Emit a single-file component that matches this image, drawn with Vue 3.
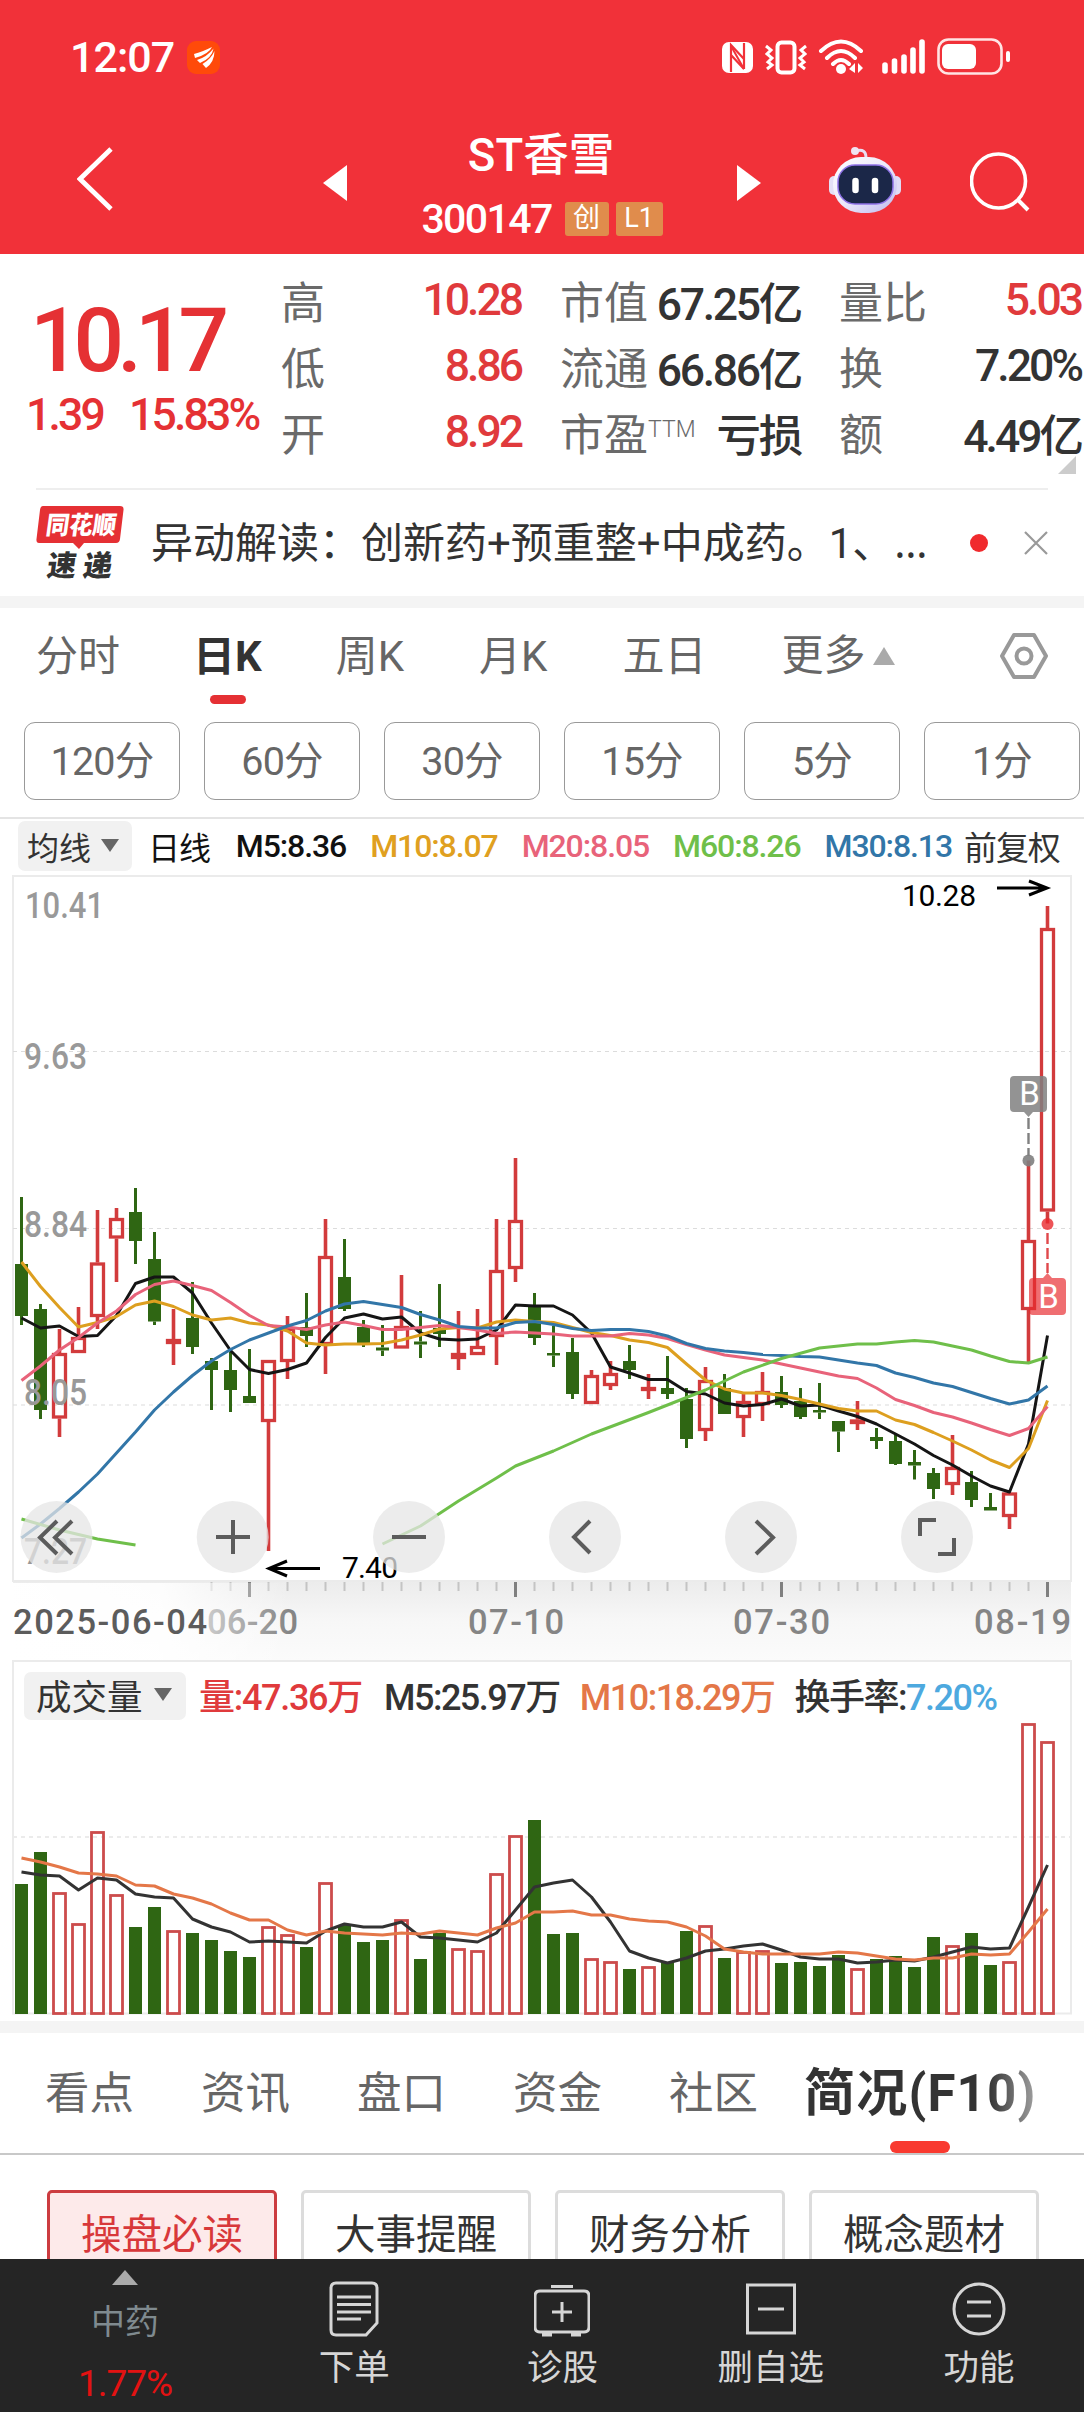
<template>
  <div class="page">
    <!-- 顶部标题栏 -->
    <header class="header">
      <div class="status-bar">
        <span class="clock">12:07</span>
        <svg class="app-badge" viewBox="0 0 33 33">
          <rect width="33" height="33" rx="9" fill="#ff4a0a" />
          <path d="M7 13 Q15 11 25 6 Q22 13 8 17 Z M10 19 Q20 16 26.500 7.500 Q25 17 13 22 Z M15.500 23 Q24 18 27.500 10 Q27.500 21 19 27 Z" fill="#fff" />
        </svg>
        <svg class="status-icons" viewBox="720 36 292 40">
          <rect x="722" y="41" width="31" height="31" rx="7" fill="#fff" />
          <path d="M731 71 V44 L744 58 M731 54 L744 68 M744 42 V68" fill="none" stroke="#f13139" stroke-width="2.200" />
          <path d="M731 45 L744 68" stroke="#f13139" stroke-width="2" />
          <rect x="777.500" y="41.500" width="17" height="30" rx="4" fill="none" stroke="#fff" stroke-width="4" />
          <path d="M766 45 l5 4 l-4 4 l5 4 l-4 4 l4 3 l-5 4 M806 45 l-5 4 l4 4 l-5 4 l4 4 l-4 3 l5 4" fill="none" stroke="#fff" stroke-width="3" />
          <path d="M821 50 Q841 31 861 50 M827 57 Q841 43 855 57 M833 63 Q841 55 849 63" fill="none" stroke="#fff" stroke-width="4" stroke-linecap="round" />
          <circle cx="841" cy="68" r="5" fill="#fff" />
          <path d="M849 68 l6 -6 v10 z M863 67 l-5 -5 v10 z" fill="#fff" />
          <path d="M885 64 V70 M894.500 60 V70 M904 56 V70 M913 49 V70 M922 41 V70" stroke="#fff" stroke-width="5.600" stroke-linecap="round" />
          <rect x="938.500" y="38.500" width="63" height="34" rx="10" fill="none" stroke="#ffe4e4" stroke-width="2.600" />
          <rect x="942" y="43" width="34" height="25" rx="6" fill="#fff" />
          <rect x="1006" y="50" width="4" height="11" rx="2" fill="#fff" />
        </svg>
      </div>
      <div class="nav">
        <svg class="back" viewBox="0 0 36 64"><path d="M34 2 L3 32 L34 62" fill="none" stroke="#fff" stroke-width="4.800" /></svg>
        <svg class="prev" viewBox="0 0 24 36"><path d="M24 0 V36 L0 18 Z" fill="#fff" /></svg>
        <div class="title">
          <div class="stock-name">ST香雪</div>
          <div class="stock-code">
            <span>300147</span><i class="tag">创</i><i class="tag wide">L1</i>
          </div>
        </div>
        <svg class="next" viewBox="0 0 24 36"><path d="M0 0 V36 L24 18 Z" fill="#fff" /></svg>
        <svg class="robot" viewBox="0 0 72 68">
          <defs>
            <linearGradient id="head" x1="0" y1="0" x2="1" y2="1">
              <stop offset="0" stop-color="#fff" />
              <stop offset=".5" stop-color="#ece9fa" />
              <stop offset="1" stop-color="#bdb8ee" />
            </linearGradient>
          </defs>
          <path d="M27 5 Q37 2 37 12" fill="none" stroke="#e9def2" stroke-width="3" />
          <circle cx="26" cy="5" r="4" fill="#f0e4f2" />
          <rect x="0" y="30" width="10" height="19" rx="5" fill="#e4e0f6" />
          <rect x="62" y="30" width="10" height="19" rx="5" fill="#e0dcf6" />
          <rect x="4" y="11" width="64" height="56" rx="28" fill="url(#head)" />
          <rect x="9" y="19" width="55" height="39" rx="17" fill="#1b2748" stroke="#8e72e6" stroke-width="1.500" />
          <path d="M26.500 35 V44 M46 35 V44" stroke="#fff" stroke-width="6.500" stroke-linecap="round" />
        </svg>
        <svg class="search" viewBox="0 0 60 60">
          <circle cx="28.500" cy="29" r="27" fill="none" stroke="#fff" stroke-width="3.600" />
          <path d="M47 47 L58 58" stroke="#fff" stroke-width="4" />
        </svg>
      </div>
    </header>

    <!-- 行情报价 -->
    <section class="quote">
      <div class="price">
        <div class="last">10.17</div>
        <div class="change"><span>1.39</span><span>15.83%</span></div>
      </div>
      <div v-for="(col, i) in quoteCols" :key="i" class="quote-col" :class="'col' + i">
        <div v-for="row in col" :key="row.label" class="quote-row">
          <span class="label">{{ row.label }}<sup v-if="row.sup">{{ row.sup }}</sup></span>
          <span class="value" :class="{ up: row.up }">{{ row.value }}</span>
        </div>
      </div>
      <i class="corner"></i>
    </section>

    <!-- 快讯 -->
    <section class="news">
      <svg class="news-logo" viewBox="0 0 90 80">
        <path d="M7 2 H84 Q88 2 87.500 6 L84 35 Q83.500 39 80 39 H48 L43 45 L37 39 H3 Q0 39 0.500 35 L4 6 Q4.500 2 7 2 Z" fill="#e53034" />
        <text x="0" y="0" transform="translate(9 30) skewX(-8)" textLength="70" lengthAdjust="spacingAndGlyphs" class="logo-top">同花顺</text>
        <text x="0" y="0" transform="translate(10 72) skewX(-8)" textLength="65" class="logo-bottom">速递</text>
      </svg>
      <span class="news-text">异动解读：创新药+预重整+中成药。1、<span class="dots">…</span></span>
      <i class="dot"></i>
      <svg class="close" viewBox="0 0 24 24"><path d="M1 1 L23 23 M23 1 L1 23" stroke="#999" stroke-width="2.200" /></svg>
    </section>

    <!-- 周期切换 -->
    <nav class="periods">
      <span v-for="p in periods" :key="p" class="period" :class="{ active: p === '日K' }">{{ p }}</span>
      <span class="period more">更多<i class="tri-up"></i></span>
      <svg class="setting" viewBox="0 0 48 48">
        <path d="M14 3 H34 L46 24 L34 45 H14 L2 24 Z" fill="none" stroke="#999" stroke-width="4" stroke-linejoin="round" />
        <circle cx="24" cy="24" r="7.500" fill="none" stroke="#999" stroke-width="4" />
      </svg>
    </nav>
    <div class="minutes">
      <span v-for="m in minutes" :key="m" class="minute">{{ m }}</span>
    </div>

    <!-- K线 -->
    <div class="ma-row">
      <span class="select">均线<i class="tri-down"></i></span>
      <span class="ma day">日线</span>
      <span v-for="m in maLegend" :key="m.text" class="ma" :class="m.cls">{{ m.text }}</span>
      <span class="ma fq">前复权</span>
    </div>
    <svg class="kline" viewBox="0 870 1084 790">
      <defs>
        <linearGradient id="axisBg" x1="0" y1="0" x2="0" y2="1">
          <stop offset="0" stop-color="#ececec" />
          <stop offset=".5" stop-color="#f7f7f7" />
          <stop offset="1" stop-color="#fbfbfb" />
        </linearGradient>
        <linearGradient id="axisFade" x1="0" y1="0" x2="1" y2="0">
          <stop offset="0" stop-color="#fff" />
          <stop offset=".55" stop-color="#fff" stop-opacity=".9" />
          <stop offset="1" stop-color="#fff" stop-opacity="0" />
        </linearGradient>
      </defs>
      <rect x="13" y="876" width="1058" height="705" class="frame" />
      <path d="M13 1051.500 H1071 M13 1228.500 H1071 M13 1405 H1071" class="grid" />

      <g v-for="(c, i) in candles" :key="i" :class="c[0]">
        <line :x1="x(i)" :x2="x(i)" :y1="c[1]" :y2="c[2]" />
        <line :x1="x(i)" :x2="x(i)" :y1="c[3]" :y2="c[4]" />
        <rect v-if="c[0] === 'g'" :x="x(i) - 6.5" :y="c[2]" width="13" :height="c[3] - c[2]" />
        <rect v-else :x="x(i) - 6" :y="c[2] + 1.5" width="12" :height="Math.max(c[3] - c[2] - 3, 1)" />
      </g>

      <g class="axis-price">
        <text x="25" y="918" textLength="79" lengthAdjust="spacingAndGlyphs">10.41</text>
        <text x="24" y="1069" textLength="63" lengthAdjust="spacingAndGlyphs">9.63</text>
        <text x="24" y="1237" textLength="63" lengthAdjust="spacingAndGlyphs">8.84</text>
        <text x="24" y="1405" textLength="63" lengthAdjust="spacingAndGlyphs">8.05</text>
        <text x="24" y="1564" textLength="63" lengthAdjust="spacingAndGlyphs">7.27</text>
      </g>

      <polyline v-for="l in maLines" :key="l.cls" :points="points(l.data)" class="ma-line" :class="l.cls" />
      <polyline :points="pairs(m60Head)" class="ma-line m60" />
      <polyline :points="pairs(m60)" class="ma-line m60" />

      <text x="902" y="906" class="extreme" textLength="74">10.28</text>
      <path d="M997 888 H1046 M1029 881 L1047 888 L1029 895" class="arrow" />
      <text x="342" y="1577.500" class="extreme" textLength="56">7.40</text>
      <path d="M320 1568.500 H270 M287 1561 L269 1568.500 L287 1576" class="arrow" />

      <!-- 买点标记 -->
      <g fill="#808080">
        <path d="M1014 1076 H1043 Q1047 1076 1047 1080 V1108 Q1047 1112 1043 1112 H1033 L1028.500 1117 L1024 1112 H1014 Q1010 1112 1010 1108 V1080 Q1010 1076 1014 1076 Z" opacity=".85" />
        <circle cx="1028.500" cy="1160.500" r="6" opacity=".9" />
        <path d="M1028.500 1118 V1156" stroke="#808080" stroke-width="2.400" stroke-dasharray="11 4" />
      </g>
      <g fill="#e8292d">
        <path d="M1033 1278 H1043 L1047.500 1273 L1052 1278 H1062 Q1066 1278 1066 1282 V1311 Q1066 1315 1062 1315 H1033 Q1029 1315 1029 1311 V1282 Q1029 1278 1033 1278 Z" opacity=".68" />
        <circle cx="1047.500" cy="1224" r="6" opacity=".8" />
        <path d="M1047.500 1233 V1273" stroke="#e0484b" stroke-width="2.400" stroke-dasharray="11 4" />
      </g>
      <text x="1029.500" y="1105" class="mark">B</text>
      <text x="1048.500" y="1308" class="mark">B</text>

      <!-- 图表操作按钮 -->
      <circle v-for="cx in [56.5, 232.7, 409, 585, 761, 937]" :key="cx" :cx="cx" cy="1537" r="36" class="op" />
      <g class="op-icon">
        <path d="M57 1521 L40 1537.500 L57 1554 M72 1521 L55 1537.500 L72 1554" />
        <path d="M216 1537 H250 M233 1520 V1554" />
        <path d="M392 1537 H426" />
        <path d="M590 1521 L574 1537 L590 1553" />
        <path d="M756 1521 L773 1537.500 L756 1554" />
        <path d="M920 1536 V1520 H936 M954 1538 V1554 H938" />
      </g>

      <!-- 时间轴 -->
      <rect x="13" y="1582" width="1058" height="78" fill="url(#axisBg)" />
      <path :d="minorTicks" stroke="#c4c4c4" stroke-width="2" />
      <path :d="majorTicks" stroke="#808080" stroke-width="3" />
      <g class="axis-date">
        <text x="207" y="1634" textLength="91">06-20</text>
        <text x="468" y="1634" textLength="96">07-10</text>
        <text x="733" y="1634" textLength="97">07-30</text>
        <text x="974" y="1634" textLength="97">08-19</text>
        <rect x="0" y="1583" width="290" height="77" fill="url(#axisFade)" />
        <text x="13" y="1634" textLength="194" class="start">2025-06-04</text>
      </g>
    </svg>

    <!-- 成交量 -->
    <section class="volume">
      <div class="vol-row">
        <span class="select">成交量<i class="tri-down"></i></span>
        <span class="vol up">量:47.36万</span>
        <span class="vol">M5:25.97万</span>
        <span class="vol orange">M10:18.29万</span>
        <span class="vol">换手率:<b>7.20%</b></span>
      </div>
      <svg class="vol-chart" viewBox="0 1720 1084 301">
        <path d="M13 1720 V2013.500 H1071 V1720" class="frame" />
        <path d="M13 1837 H1071" class="grid bold" />
        <template v-for="(v, i) in volumes" :key="i">
          <rect v-if="v[0] === 'g'" :x="x(i) - 6.5" :y="v[1]" width="13" :height="2014 - v[1]" class="vg" />
          <rect v-else :x="x(i) - 6" :y="v[1] + 0.5" width="12" :height="2013 - v[1]" class="vr" />
        </template>
        <polyline :points="points(volM5)" class="ma-line vm5" />
        <polyline :points="points(volM10)" class="ma-line vm10" />
      </svg>
    </section>

    <!-- 资料标签 -->
    <nav class="info-tabs">
      <span v-for="t in infoTabs" :key="t" class="info-tab">{{ t }}</span>
      <span class="info-tab active">简况(F10)</span>
    </nav>
    <div class="cards">
      <span v-for="(c, i) in cards" :key="c" class="card" :class="{ selected: i === 0 }">{{ c }}</span>
    </div>

    <!-- 底部操作栏 -->
    <footer class="footer">
      <div class="sector">
        <i class="tri-up"></i>
        <span class="sector-name">中药</span>
        <span class="sector-rate">1.77%</span>
      </div>
      <div class="action">
        <svg viewBox="0 0 56 58">
          <path d="M10 3 H46 Q51 3 51 8 V43 L40 55 H10 Q5 55 5 50 V8 Q5 3 10 3 Z M11 17 H45 M11 24.500 H45 M11 32 H45 M11 39 H35" />
        </svg>
        <span>下单</span>
      </div>
      <div class="action">
        <svg viewBox="0 0 56 58">
          <path d="M6 11 H50 Q55 11 55 16 V47 Q55 52 50 52 H6 Q1 52 1 47 V16 Q1 11 6 11 Z M17 6.500 H39 M28 22 V42 M18 32 H38 M8 55 H18 M37 55 H47" />
        </svg>
        <span>诊股</span>
      </div>
      <div class="action">
        <svg viewBox="0 0 56 58"><path d="M4.500 5 H51.500 V53 H4.500 Z M15 29 H41" /></svg>
        <span>删自选</span>
      </div>
      <div class="action">
        <svg viewBox="0 0 56 58"><circle cx="28" cy="29" r="25" /><path d="M16 22 H40 M16 36 H40" /></svg>
        <span>功能</span>
      </div>
    </footer>
  </div>
</template>

<script setup>
const quoteCols = [
  [
    { label: '高', value: '10.28', up: true },
    { label: '低', value: '8.86', up: true },
    { label: '开', value: '8.92', up: true }
  ],
  [
    { label: '市值', value: '67.25亿' },
    { label: '流通', value: '66.86亿' },
    { label: '市盈', sup: 'TTM', value: '亏损' }
  ],
  [
    { label: '量比', value: '5.03', up: true },
    { label: '换', value: '7.20%' },
    { label: '额', value: '4.49亿' }
  ]
]

const periods = ['分时', '日K', '周K', '月K', '五日']
const minutes = ['120分', '60分', '30分', '15分', '5分', '1分']
const maLegend = [
  { text: 'M5:8.36', cls: 't5' },
  { text: 'M10:8.07', cls: 't10' },
  { text: 'M20:8.05', cls: 't20' },
  { text: 'M60:8.26', cls: 't60' },
  { text: 'M30:8.13', cls: 't30' }
]
const infoTabs = ['看点', '资讯', '盘口', '资金', '社区']
const cards = ['操盘必读', '大事提醒', '财务分析', '概念题材']

// 每根K线: [颜色, 最高, 实体上沿, 实体下沿, 最低]
const candles = [
  ['g', 1197, 1264, 1316, 1325], ['g', 1304, 1309, 1410, 1419], ['r', 1329, 1353, 1418.5, 1437],
  ['r', 1307, 1337, 1353, 1353], ['r', 1210, 1262.5, 1317, 1329], ['r', 1208, 1218, 1238.5, 1282],
  ['g', 1188, 1212, 1241, 1264], ['g', 1232, 1259, 1321.5, 1325], ['r', 1309, 1339, 1344, 1365],
  ['g', 1282, 1318, 1347, 1354], ['g', 1358, 1361, 1370, 1410], ['g', 1352, 1370, 1390, 1412],
  ['g', 1349, 1396, 1403, 1403], ['r', 1360, 1360, 1422, 1551], ['r', 1316, 1328, 1362, 1379],
  ['g', 1293, 1327, 1336, 1347], ['r', 1219, 1256, 1345, 1374], ['g', 1239, 1277, 1309, 1311],
  ['g', 1320, 1327, 1345, 1347], ['g', 1325, 1347.5, 1350.5, 1356], ['r', 1275, 1326, 1348.5, 1348.5],
  ['g', 1311, 1341.5, 1344.5, 1358], ['g', 1284, 1328, 1334, 1347], ['r', 1311, 1353, 1359, 1370],
  ['r', 1309, 1346, 1355, 1355], ['r', 1219, 1270, 1337, 1365], ['r', 1158, 1220, 1269, 1282],
  ['g', 1293, 1305, 1338, 1345], ['g', 1326, 1353, 1355.5, 1367], ['g', 1338, 1352, 1394, 1399],
  ['r', 1370, 1375, 1404, 1404], ['r', 1361, 1373, 1386, 1390], ['g', 1345, 1361, 1370, 1379],
  ['r', 1374, 1387, 1391, 1399], ['g', 1356, 1388, 1394, 1399], ['g', 1388, 1399, 1439, 1448],
  ['r', 1367, 1380, 1431, 1441], ['g', 1374, 1388, 1414, 1414], ['r', 1393, 1401, 1418, 1437],
  ['r', 1372, 1391, 1405, 1421], ['g', 1376, 1392, 1405, 1408], ['g', 1388, 1401, 1417, 1419],
  ['g', 1383, 1410, 1412.5, 1419], ['g', 1421, 1421, 1431.5, 1452], ['r', 1401, 1419.5, 1424, 1430],
  ['g', 1428, 1437, 1441, 1449], ['g', 1434, 1441, 1464, 1465], ['g', 1450, 1462, 1465.5, 1479.5],
  ['g', 1468, 1473, 1489, 1499], ['r', 1435, 1467, 1485, 1495], ['g', 1471, 1482, 1500, 1507],
  ['g', 1493, 1507, 1510.5, 1510.5], ['r', 1492.5, 1492.5, 1517, 1529], ['r', 1160.5, 1240, 1310, 1362],
  ['r', 906, 928, 1211.5, 1223.5]
]

const maLines = [
  {
    cls: 'm5',
    data: [1318, 1328, 1326, 1336.5, 1335.5, 1315.5, 1283.5, 1277, 1277, 1293, 1323, 1350.5, 1369.5, 1373.5, 1369.5, 1363, 1337.5, 1318, 1314, 1319, 1317, 1333, 1339, 1340, 1339, 1330, 1305, 1306, 1306, 1315, 1333, 1367, 1373, 1379.5, 1379.5, 1391.5, 1394, 1403, 1406, 1404.5, 1399, 1406, 1405, 1411, 1416.5, 1424, 1434, 1444, 1455.5, 1465, 1476, 1486, 1492, 1444, 1335.5]
  },
  {
    cls: 'm10',
    data: [1262, 1286.5, 1307.5, 1327, 1322.5, 1316.5, 1305, 1301, 1306.5, 1315, 1320, 1318, 1323, 1325, 1331, 1343, 1345, 1344, 1344, 1343.5, 1340, 1335, 1329, 1327.5, 1328, 1322, 1320, 1321.5, 1322.5, 1327.5, 1332.5, 1335.5, 1340, 1342.5, 1347.5, 1364, 1380, 1389, 1393, 1393, 1395.5, 1399.5, 1404, 1408.5, 1411, 1411, 1420, 1424.5, 1432.5, 1441, 1450, 1460, 1467.5, 1448.5, 1400.5]
  },
  {
    cls: 'm20',
    data: [1380.5, 1366, 1350, 1337.5, 1323, 1311, 1294.5, 1284.5, 1281, 1285.5, 1290.5, 1302.5, 1315.5, 1325.5, 1327, 1329.5, 1325, 1322, 1325.5, 1329.5, 1329.5, 1327.5, 1325.5, 1327.5, 1330, 1333.5, 1332, 1333, 1334, 1336, 1336, 1336, 1333.5, 1335, 1338.5, 1344.5, 1350, 1355, 1357.5, 1360, 1364, 1368, 1372, 1376, 1378.5, 1388, 1399.5, 1405.5, 1412.5, 1417, 1423, 1429.5, 1435.5, 1428.5, 1406.5]
  },
  {
    cls: 'm30',
    data: [1538, 1524, 1508.5, 1492, 1474, 1453, 1432, 1410, 1392, 1375.5, 1361, 1349.5, 1340, 1333, 1326, 1320.5, 1311, 1304, 1301.5, 1304.5, 1307.5, 1314.5, 1320, 1326.5, 1328, 1328, 1322.5, 1321.5, 1324.5, 1328.5, 1330.5, 1329.5, 1329.5, 1331.5, 1336, 1343.5, 1348.5, 1351, 1352.5, 1354.5, 1355.5, 1356.5, 1357, 1360, 1363, 1365.5, 1373, 1377.5, 1383, 1386.5, 1392.5, 1398.5, 1404, 1400, 1386]
  }
]

// 60日均线只有部分点, 以 [序号, y] 记录
const m60Head = [[0, 1519], [2, 1530], [4, 1539], [6, 1545]]
const m60 = [
  [19, 1544], [21, 1526], [23, 1501], [25, 1478], [26, 1466], [28, 1451], [30, 1434], [33, 1412.5],
  [35, 1397.5], [36, 1390], [38, 1372], [40, 1358.5], [42, 1348], [44, 1344], [45, 1344], [46, 1342],
  [47, 1340.5], [48, 1342], [49, 1346], [50, 1350], [51, 1356], [52, 1361.5], [53, 1363], [54, 1357]
]

const volumes = [
  ['g', 1884], ['g', 1852], ['r', 1893], ['r', 1924], ['r', 1832], ['r', 1895], ['g', 1927], ['g', 1907],
  ['r', 1931], ['g', 1933], ['g', 1940], ['g', 1951], ['g', 1957], ['r', 1927], ['r', 1935], ['g', 1947],
  ['r', 1883], ['g', 1925], ['g', 1942], ['g', 1940], ['r', 1920], ['g', 1959], ['g', 1933], ['r', 1949],
  ['r', 1951], ['r', 1874], ['r', 1836], ['g', 1820], ['g', 1934], ['g', 1933], ['r', 1959], ['r', 1962],
  ['g', 1969], ['r', 1967], ['g', 1962], ['g', 1931], ['r', 1926], ['g', 1958], ['r', 1952], ['r', 1951],
  ['g', 1963], ['g', 1962], ['g', 1966], ['g', 1955], ['r', 1969], ['g', 1959], ['g', 1956], ['g', 1967],
  ['g', 1937], ['r', 1946], ['g', 1933], ['g', 1965], ['r', 1962], ['r', 1724], ['r', 1742]
]
const volM5 = [1872, 1875, 1876, 1890, 1878, 1880, 1894, 1897, 1898, 1919, 1927, 1932, 1942, 1941, 1942, 1943, 1931, 1924, 1927, 1927, 1922, 1937, 1938, 1940, 1942, 1933, 1910, 1887, 1883, 1880, 1897, 1922, 1951, 1958, 1963, 1958, 1951, 1949, 1946, 1944, 1950, 1957, 1959, 1959, 1963, 1962, 1960, 1961, 1957, 1952, 1947, 1949, 1948, 1907, 1865]
const volM10 = [1858, 1862, 1867, 1873, 1874, 1876, 1885, 1886, 1894, 1898, 1904, 1913, 1920, 1920, 1930, 1935, 1931, 1933, 1934, 1935, 1933, 1934, 1931, 1933, 1935, 1928, 1923, 1912, 1912, 1911, 1915, 1915, 1919, 1921, 1922, 1927, 1936, 1949, 1952, 1954, 1954, 1954, 1954, 1952, 1953, 1956, 1959, 1960, 1958, 1958, 1954, 1955, 1954, 1932, 1909]

const x = (i) => 21.5 + i * 19
const points = (data) => data.map((y, i) => `${x(i)},${y}`).join(' ')
const pairs = (data) => data.map(([i, y]) => `${x(i)},${y}`).join(' ')

const isMajor = (i) => (i - 12) % 14 === 0
const ticks = candles.map((_, i) => i).filter((i) => i >= 10)
const minorTicks = ticks.filter((i) => !isMajor(i)).map((i) => `M${x(i)} 1582 V1591`).join(' ')
const majorTicks = ticks.filter(isMajor).map((i) => `M${x(i)} 1582 V1597`).join(' ')
</script>

<style>
body {
  background: #fff;
}
</style>

<style scoped>
.page {
  width: 1084px;
  height: 2412px;
  overflow: hidden;
  display: flex;
  flex-direction: column;
  background: #fff;
  color: #333;
  font-family: Roboto, "Noto Sans CJK SC", sans-serif;
  white-space: nowrap;
}

.page > * {
  flex-shrink: 0;
  box-sizing: border-box;
}

i {
  font-style: normal;
}

.up {
  color: #e03a3c !important;
}

/* 顶部 */
.header {
  height: 254px;
  background: #f13139;
  color: #fff;
}

.status-bar {
  height: 112px;
  padding: 2px 72px 0 70px;
  box-sizing: border-box;
  display: flex;
  align-items: center;
}

.clock {
  font-size: 43px;
  font-weight: 500;
  letter-spacing: -1px;
}

.app-badge {
  width: 33px;
  height: 33px;
  margin-left: 13px;
}

.status-icons {
  width: 292px;
  height: 40px;
  margin-left: auto;
}

.nav {
  height: 142px;
  padding: 0 54px 0 77px;
  display: flex;
  align-items: center;
}

.back {
  width: 36px;
  height: 64px;
  margin-top: -8px;
}

.prev,
.next {
  width: 24px;
  height: 36px;
}

.prev {
  margin-left: 210px;
}

.title {
  width: 390px;
  display: flex;
  flex-direction: column;
  align-items: center;
}

.stock-name {
  font-size: 45.5px;
  line-height: 64px;
  margin-top: 7px;
  margin-left: -2px;
  font-weight: 500;
}

.stock-code {
  display: flex;
  align-items: center;
  height: 62px;
  font-size: 41px;
  font-weight: 500;
  letter-spacing: -1.6px;
}

.tag {
  width: 44px;
  height: 34px;
  line-height: 32px;
  margin-left: 13px;
  background: #e08c4c;
  border-radius: 3px;
  text-align: center;
  font-size: 27px;
  font-weight: 400;
  letter-spacing: 0;
}

.tag.wide {
  width: 47px;
  margin-left: 7px;
}

.robot {
  width: 72px;
  height: 68px;
  margin-left: 68px;
  margin-top: -6px;
}

.search {
  width: 60px;
  height: 60px;
  margin-left: auto;
  margin-top: -2px;
}

/* 报价 */
.quote {
  position: relative;
  height: 234px;
  display: flex;
  padding-top: 15px;
  font-size: 44px;
}

.price {
  width: 281px;
  color: #e53134;
}

.last {
  padding-left: 30px;
  font-size: 89px;
  line-height: 104px;
  margin-top: 20px;
  font-weight: 500;
  letter-spacing: -7px;
}

.change {
  display: flex;
  gap: 26px;
  padding-left: 26px;
  font-weight: 500;
  font-size: 44.5px;
  line-height: 44px;
  letter-spacing: -2.8px;
}

.quote-col {
  display: flex;
  flex-direction: column;
}

.quote-row {
  height: 66px;
  display: flex;
  align-items: center;
  justify-content: space-between;
}

.col0 {
  width: 240px;
}

.col1 {
  width: 241px;
  margin-left: 39px;
}

.col2 {
  width: 242px;
  margin-left: 38px;
}

.label {
  color: #6a6a6a;
  padding-bottom: 5px;
}

.label sup {
  font-size: 23px;
  vertical-align: 14px;
  line-height: 0;
  font-weight: 300;
}

.value {
  font-size: 44.5px;
  font-weight: 500;
  letter-spacing: -2.3px;
  padding-bottom: 4px;
}

.col0 .value,
.col2 .value {
  letter-spacing: -3px;
}

.corner {
  position: absolute;
  right: 8px;
  bottom: 14px;
  border-left: 18px solid transparent;
  border-bottom: 18px solid #ccc;
}

/* 快讯 */
.news {
  height: 108px;
  margin: 0 36px;
  border-top: 2px solid #eee;
  display: flex;
  align-items: center;
}

.news-logo {
  width: 90px;
  height: 80px;
  margin-top: 2px;
}

.logo-top {
  font-size: 25px;
  font-weight: 900;
  fill: #fff;
}

.logo-bottom {
  font-size: 29px;
  font-weight: 900;
  fill: #333;
}

.news-text {
  margin-left: 25px;
  padding-bottom: 7px;
  font-size: 42px;
  width: 819px;
}

.dots {
  font-family: "Noto Sans", sans-serif;
  letter-spacing: 0;
}

.dot {
  width: 18px;
  height: 18px;
  border-radius: 50%;
  background: #f02a2d;
}

.close {
  width: 24px;
  height: 24px;
  margin-left: auto;
}

/* 周期 */
.periods {
  height: 126px;
  border-top: 12px solid #f4f4f4;
  padding: 0 36px;
  display: flex;
  align-items: flex-start;
  font-size: 42px;
  color: #666;
}

.period {
  position: relative;
  height: 96px;
  line-height: 98px;
}

.period:nth-child(1) {
  margin-right: 73px;
}

.period:nth-child(2) {
  margin-right: 74px;
}

.period:nth-child(3),
.period:nth-child(4) {
  margin-right: 75px;
}

.period:nth-child(5) {
  margin-right: 75px;
}

.period.active {
  color: #333;
  font-weight: 700;
}

.period.active::after {
  content: "";
  position: absolute;
  left: 17px;
  bottom: 0;
  width: 36px;
  height: 9px;
  border-radius: 5px;
  background: #e53034;
}

.more {
  display: flex;
  align-items: center;
}

.tri-up {
  display: inline-block;
  margin-left: 8px;
  border: 11px solid transparent;
  border-top: 0;
  border-bottom: 18px solid #aaa;
}

.setting {
  width: 48px;
  height: 48px;
  margin-top: 24px;
  margin-left: auto;
}

.minutes {
  height: 97px;
  display: flex;
  gap: 24px;
  padding-left: 24px;
  border-bottom: 2px solid #e4e4e4;
}

.minute {
  flex: 0 0 156px;
  height: 78px;
  box-sizing: border-box;
  border: 1.5px solid #999;
  border-radius: 11px;
  text-align: center;
  line-height: 78px;
  font-size: 39.5px;
  letter-spacing: -0.8px;
  color: #666;
}

/* 均线 */
.ma-row {
  height: 51px;
  display: flex;
  align-items: center;
  padding: 2px 0 0 18px;
  font-size: 32px;
}

.select {
  display: inline-flex;
  align-items: center;
  background: #f1f1f1;
  border-radius: 7px;
  color: #333;
}

.ma-row .select {
  width: 114px;
  height: 50px;
  padding-left: 9px;
  box-sizing: border-box;
}

.tri-down {
  margin-left: 10px;
  border: 9px solid transparent;
  border-bottom: 0;
  border-top: 13px solid #666;
}

.ma {
  margin-left: 24px;
  letter-spacing: -1.1px;
  padding-top: 1px;
  font-weight: 500;
}

.ma.day {
  margin-left: 16px;
  margin-right: 2px;
  font-weight: 400;
}

.ma.day,
.t5 {
  color: #111;
}

.t10 {
  color: #e0a020;
}

.t20 {
  color: #e8637a;
}

.t60 {
  color: #6fbf4a;
}

.t30 {
  color: #3276a8;
}

.ma.fq {
  margin-left: 12px;
  padding-top: 0;
  font-weight: 400;
  font-size: 33px;
}

.kline {
  display: block;
  width: 1084px;
  height: 790px;
}

.frame {
  fill: none;
  stroke: #ebebeb;
  stroke-width: 2;
}

.grid {
  stroke: #dcdcdc;
  stroke-width: 1.2;
  stroke-dasharray: 4 4;
}

.grid.bold {
  stroke: #ebebeb;
  stroke-width: 2;
}

.g line {
  stroke: #2f6613;
  stroke-width: 3;
}

.g rect,
.vg {
  fill: #2f6613;
}

.r line {
  stroke: #d23b3c;
  stroke-width: 3.6;
}

.r rect {
  fill: none;
  stroke: #d23b3c;
  stroke-width: 3.3;
}

.vr {
  fill: none;
  stroke: #cc4c4c;
  stroke-width: 2.8;
}

.axis-price text {
  font-size: 36px;
  font-weight: 500;
  fill: #999;
}

.ma-line {
  fill: none;
  stroke-width: 3;
  stroke-linejoin: round;
}

.m5 {
  stroke: #151515;
}

.m10 {
  stroke: #dd9f1f;
}

.m20 {
  stroke: #e8637a;
}

.m30 {
  stroke: #3276a8;
}

.m60 {
  stroke: #6fbf4a;
}

.vm5 {
  stroke: #333;
}

.vm10 {
  stroke: #e47748;
}

.extreme {
  font-size: 30px;
  fill: #000;
}

.arrow {
  fill: none;
  stroke: #000;
  stroke-width: 3;
}

.mark {
  fill: #fff;
  font-size: 33px;
  text-anchor: middle;
}

.op {
  fill: #e6e6e6;
  fill-opacity: 0.75;
}

.op-icon {
  fill: none;
  stroke: #5c5c5c;
  stroke-width: 4;
}

.axis-date text {
  font-size: 34.5px;
  font-weight: 500;
  fill: #858585;
}

.axis-date .start {
  fill: #5c5c5c;
}

/* 成交量 */
.volume {
  height: 361px;
}

.vol-row {
  height: 60px;
  margin: 0 12px;
  border: 2px solid #ebebeb;
  border-bottom: 0;
  box-sizing: border-box;
  display: flex;
  align-items: center;
  padding: 10px 0 0 10px;
  font-size: 36px;
}

.vol-row .select {
  width: 162px;
  height: 48px;
  padding: 0 0 4px 12px;
  box-sizing: border-box;
  margin-right: 13px;
  font-size: 35.5px;
}

.vol-row .tri-down {
  margin-left: 11px;
}

.vol {
  margin-right: 20px;
  padding-bottom: 4px;
  letter-spacing: -1.5px;
  font-weight: 500;
}

.vol.up {
  margin-right: 22px;
  letter-spacing: -1.3px;
}

.orange {
  color: #e47748;
}

.vol b {
  font-weight: 500;
  color: #4da9df;
}

.vol-chart {
  display: block;
  width: 1084px;
  height: 301px;
}

/* 资料标签 */
.info-tabs {
  height: 134px;
  border-top: 12px solid #f4f4f4;
  border-bottom: 2px solid #c8c8c8;
  display: flex;
  align-items: center;
  padding-left: 45px;
  font-size: 44.5px;
  color: #666;
}

.info-tab {
  width: 89px;
  height: 120px;
  line-height: 122px;
  margin-right: 67px;
  flex-shrink: 0;
}

.info-tab:nth-child(5) {
  margin-right: 46px;
}

.info-tab.active {
  position: relative;
  width: 236px;
  margin-right: 0;
  font-size: 51px;
  font-weight: 700;
  letter-spacing: 1.2px;
  background: linear-gradient(90deg, #333 78%, #aaa 100%);
  background-clip: text;
  color: transparent;
}

.info-tab.active::after {
  content: "";
  position: absolute;
  left: 86px;
  bottom: 0;
  width: 60px;
  height: 12px;
  border-radius: 6px;
  background: #f93a30;
}

.cards {
  height: 104px;
  overflow: hidden;
  padding: 35px 0 0 47px;
  display: flex;
  gap: 24px;
}

.card {
  flex: 0 0 230px;
  height: 90px;
  box-sizing: border-box;
  border: 3px solid #dcdcdc;
  border-radius: 5px;
  text-align: center;
  line-height: 85px;
  font-size: 40.5px;
}

.card.selected {
  color: #d8383a;
  border-color: #cc3c40;
  background: #fdeaea;
}

/* 底部 */
.footer {
  height: 153px;
  background: #252525;
  display: flex;
  color: #d6d6d6;
}

.sector {
  width: 250px;
  display: flex;
  flex-direction: column;
  align-items: center;
}

.sector .tri-up {
  margin: 11px 0 0;
  border-width: 0 13px 15px;
}

.sector-name {
  margin-top: 13px;
  line-height: 48px;
  font-size: 34px;
  color: #7f8a8f;
}

.sector-rate {
  margin-top: 16px;
  line-height: 44px;
  font-size: 37px;
  letter-spacing: -1px;
  color: #e31212;
}

.action {
  width: 208.3px;
  display: flex;
  flex-direction: column;
  align-items: center;
  font-size: 35.5px;
}

.action svg {
  width: 56px;
  height: 58px;
  margin-top: 21px;
  fill: none;
  stroke: #d6d6d6;
  stroke-width: 3;
}

.action span {
  line-height: 50px;
  margin-top: 5px;
}
</style>
